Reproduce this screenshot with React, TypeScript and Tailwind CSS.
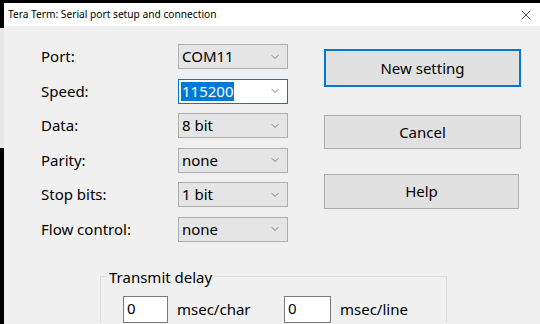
import { ChevronDown, X } from 'lucide-react'

const font = { fontFamily: '"Noto Sans", "Open Sans", sans-serif' }

const ROWS: { label: string; value: string; focused?: boolean }[] = [
  { label: 'Port:', value: 'COM11' },
  { label: 'Speed:', value: '115200', focused: true },
  { label: 'Data:', value: '8 bit' },
  { label: 'Parity:', value: 'none' },
  { label: 'Stop bits:', value: '1 bit' },
  { label: 'Flow control:', value: 'none' },
]

function Combo({ value, focused }: { value: string; focused?: boolean }) {
  if (focused) {
    return (
      <div className="w-[110px] h-[25px] flex items-center bg-white border border-[#0078d7] pl-[2px] pr-[6px]">
        <span className="bg-[#0078d7] text-white leading-[19px] px-[1px]">{value}</span>
        <div className="flex-1" />
        <ChevronDown width={12} height={12} strokeWidth={1.5} className="text-[#555]" />
      </div>
    )
  }
  return (
    <div className="w-[110px] h-[25px] flex items-center bg-[#e5e5e5] border border-[#adadad] pl-[3px] pr-[6px]">
      <span className="text-black">{value}</span>
      <div className="flex-1" />
      <ChevronDown width={12} height={12} strokeWidth={1.5} className="text-[#555]" />
    </div>
  )
}

export default function App() {
  return (
    <div className="w-[540px] h-[324px] bg-black overflow-hidden flex flex-col" style={font}>
      <div className="h-[3px] shrink-0" />
      <div className="flex flex-1 min-h-0">
        {/* sliver of the window behind */}
        <div className="w-[4px] flex flex-col">
          <div className="h-[25px]" />
          <div className="h-[120px] bg-[#e8e8e8]" />
        </div>
        <div className="flex-1 flex flex-col bg-[#f0f0f0]">
          {/* title bar */}
          <div className="h-[23px] shrink-0 bg-white flex items-center pl-[4px] pr-[6px]">
            <span className="text-[10.2px] text-black">Tera Term: Serial port setup and connection</span>
            <div className="flex-1" />
            <X width={16} height={16} strokeWidth={1.2} className="text-[#222]" />
          </div>
          {/* body */}
          <div className="flex pl-[37px] pt-[18px]">
            <div className="flex flex-col gap-[9.5px]">
              {ROWS.map((r) => (
                <div key={r.label} className="flex items-center text-[15px] text-black">
                  <div className="w-[137px]">{r.label}</div>
                  <Combo value={r.value} focused={r.focused} />
                </div>
              ))}
            </div>
            <div className="flex flex-col ml-[36px] pt-[5px] text-[15px] text-black">
              <div className="w-[197px] h-[38px] flex items-center justify-center bg-[#e1e1e1] border-2 border-[#0078d7]">New setting</div>
              <div className="w-[197px] h-[34px] mt-[28px] flex items-center justify-center bg-[#e1e1e1] border border-[#adadad]">Cancel</div>
              <div className="w-[195px] h-[35px] mt-[25px] flex items-center justify-center bg-[#e1e1e1] border border-[#adadad]">Help</div>
            </div>
          </div>
          {/* transmit delay group */}
          <fieldset className="ml-[96px] mt-[26px] w-[347px] border border-[#dcdcdc] border-b-0">
            <legend className="ml-[6px] px-[2px] text-[15px] text-black leading-[18px]">Transmit delay</legend>
            <div className="flex items-center pl-[22px] pt-[10px] text-[15px] text-black">
              <div className="w-[45px] h-[27px] bg-white border border-[#7a7a7a] pl-[3px] leading-[22px]">0</div>
              <span className="ml-[9px] w-[107px]">msec/char</span>
              <div className="w-[47px] h-[27px] bg-white border border-[#7a7a7a] pl-[3px] leading-[22px]">0</div>
              <span className="ml-[9px]">msec/line</span>
            </div>
          </fieldset>
        </div>
      </div>
    </div>
  )
}
